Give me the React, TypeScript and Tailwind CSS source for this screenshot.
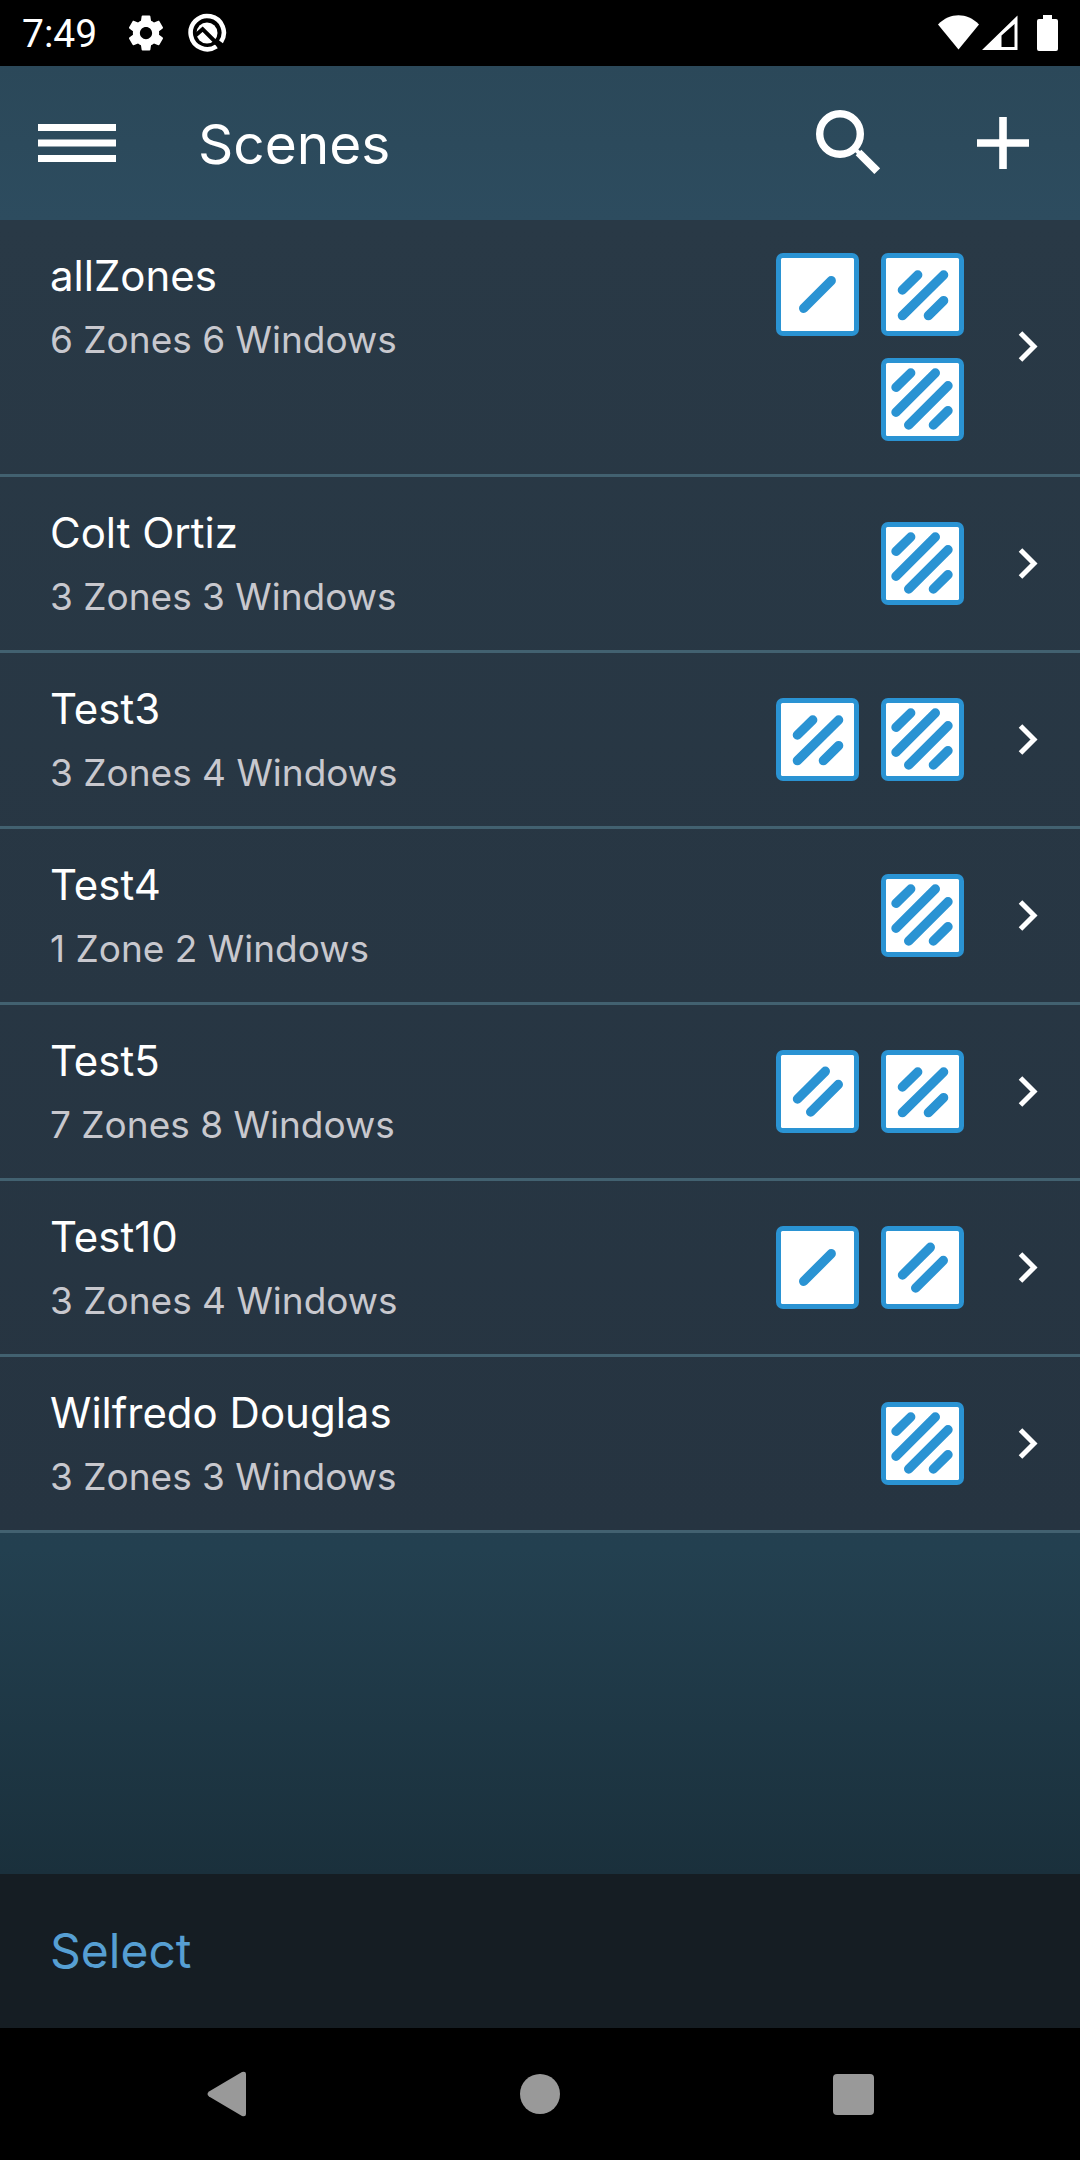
import React from "react";

type Level = 1 | 2 | 3 | 4;

const STRIPES: Record<Level, string> = {
  1: "M27.7 55.3 55.2 27.7",
  2: "M21.5 49 49.3 21.3M34.7 62 62.3 34.5",
  3: "M21.4 37 36.7 22M21.4 62.6 62.6 22M47.4 62.6 62.6 47.6",
  4: "M15 29.3 29.7 15M15 54.3 54.3 15M27.7 67 67 27.7M52.4 67 67 52.7",
};

const SCENES: { name: string; detail: string; tiles: Level[] }[] = [
  { name: "allZones", detail: "6 Zones 6 Windows", tiles: [1, 3, 4] },
  { name: "Colt Ortiz", detail: "3 Zones 3 Windows", tiles: [4] },
  { name: "Test3", detail: "3 Zones 4 Windows", tiles: [3, 4] },
  { name: "Test4", detail: "1 Zone 2 Windows", tiles: [4] },
  { name: "Test5", detail: "7 Zones 8 Windows", tiles: [2, 3] },
  { name: "Test10", detail: "3 Zones 4 Windows", tiles: [1, 2] },
  { name: "Wilfredo Douglas", detail: "3 Zones 3 Windows", tiles: [4] },
];

function StatusBar() {
  return (
    <div className="flex h-[66px] shrink-0 items-center justify-between bg-black pr-[22px] pl-[22px] text-white">
      <div className="flex items-center">
        <span className="pt-[2px] font-['Roboto',sans-serif] text-[39px] leading-[48px]">7:49</span>
        <svg className="ml-7 h-[42px] w-[42px]" viewBox="0 0 24 24" fill="currentColor" aria-hidden="true">
          <path d="M19.43 12.98c.04-.32.07-.64.07-.98s-.03-.66-.07-.98l2.11-1.65c.19-.15.24-.42.12-.64l-2-3.46c-.12-.22-.39-.3-.61-.22l-2.49 1c-.52-.4-1.08-.73-1.69-.98l-.38-2.65C14.46 2.18 14.25 2 14 2h-4c-.25 0-.46.18-.49.42l-.38 2.65c-.61.25-1.17.59-1.69.98l-2.49-1c-.23-.09-.49 0-.61.22l-2 3.46c-.13.22-.07.49.12.64l2.11 1.65c-.04.32-.07.65-.07.98s.03.66.07.98l-2.11 1.65c-.19.15-.24.42-.12.64l2 3.46c.12.22.39.3.61.22l2.49-1c.52.4 1.08.73 1.69.98l.38 2.65c.03.24.24.42.49.42h4c.25 0 .46-.18.49-.42l.38-2.65c.61-.25 1.17-.59 1.69-.98l2.49 1c.23.09.49 0 .61-.22l2-3.46c.12-.22.07-.49-.12-.64l-2.11-1.65zM12 15.5c-1.93 0-3.5-1.57-3.5-3.5s1.57-3.5 3.5-3.5 3.5 1.57 3.5 3.5-1.57 3.5-3.5 3.5z" />
        </svg>
        <svg className="ml-5 h-10 w-10" viewBox="0 0 40 40" aria-hidden="true">
          <path d="M29.5 33.4A16.6 16.6 0 1 1 34 28.9" fill="none" stroke="currentColor" strokeWidth="4.6" />
          <circle cx="20" cy="20" r="10.5" fill="currentColor" />
          <path d="M9 22 15.6 16.2 31 31.5" fill="none" stroke="#000" strokeWidth="4" />
        </svg>
      </div>
      <svg className="h-9 w-[120px]" viewBox="1 0 120 36" fill="currentColor" aria-hidden="true">
        <path d="M1 9.5C13-2.8 30-2.8 42 9.5L21.500 34.500Z" />
        <path fillRule="evenodd" d="M80.500 0.500V35H45ZM64.500 20.500V32H77.500V9Z" />
        <path d="M106 0h9v4h4q2 0 2 2v28q0 2-2 2h-17q-2 0-2-2V6q0-2 2-2h4Z" />
      </svg>
    </div>
  );
}

function Header() {
  return (
    <header className="flex h-[154px] shrink-0 items-center bg-linear-to-b from-[#2b4859] to-[#2d4c5f] pr-[29px] pl-[29px] text-white">
      <button type="button" aria-label="Menu" className="flex h-24 w-24 items-center justify-center">
        <svg className="h-[38px] w-[78px]" viewBox="0 0 78 38" fill="currentColor" aria-hidden="true">
          <path d="M0 0h78v7H0zM0 15.500h78v7H0zM0 31h78v7H0z" />
        </svg>
      </button>
      <h1 className="ml-[73px] flex-1 pt-[2px] text-[55px] leading-[64px]">Scenes</h1>
      <button type="button" aria-label="Search" className="mr-[59px] flex h-24 w-24 items-center justify-center pb-[2px]">
        <svg className="h-16 w-16" viewBox="0 0 64 64" fill="none" stroke="currentColor" aria-hidden="true">
          <circle cx="24" cy="24" r="20.300" strokeWidth="7.400" />
          <path d="M37 37 43 43" strokeWidth="4" />
          <path d="M42.500 42.500 61.200 61.200" strokeWidth="8" />
        </svg>
      </button>
      <button type="button" aria-label="Add scene" className="flex h-24 w-24 items-center justify-center">
        <svg className="h-[52px] w-[52px]" viewBox="0 0 52 52" fill="none" stroke="currentColor" strokeWidth="7.600" aria-hidden="true">
          <path d="M26 0V52M0 26H52" />
        </svg>
      </button>
    </header>
  );
}

function Tile({ level }: { level: Level }) {
  return (
    <svg className="h-[83px] w-[83px]" viewBox="0 0 83 83" aria-hidden="true">
      <rect width="83" height="83" rx="7" fill="#2a93d3" />
      <rect x="5" y="5" width="73" height="73" rx="1.500" fill="#fff" />
      <path d={STRIPES[level]} fill="none" stroke="#2a93d3" strokeWidth="9.400" strokeLinecap="round" />
    </svg>
  );
}

export default function App() {
  return (
    <div className="flex min-h-screen flex-col bg-black font-['Inter',sans-serif]">
      <StatusBar />
      <div className="flex flex-1 flex-col bg-linear-to-b from-[#2c495a] from-0% via-[#234050] via-82% to-[#1a303c] to-100%">
        <Header />
        <ul className="bg-linear-to-b from-[#293946] to-[#263441]">
          {SCENES.map((scene) => (
            <li key={scene.name} className="border-b-[3px] border-[#426170]">
              <button type="button" className="flex w-full items-center pr-[42px] pl-[50px] text-left">
                <span className="flex flex-1 flex-col gap-2 self-start pt-7 pb-[25px]">
                  <span className="text-[42px] leading-[56px] text-white">{scene.name}</span>
                  <span className="text-[37px] leading-[56px] text-[#c8c8ce]">{scene.detail}</span>
                </span>
                <span className="flex w-[188px] flex-wrap justify-end gap-[22px] py-[33px]">
                  {scene.tiles.map((level) => (
                    <Tile key={level} level={level} />
                  ))}
                </span>
                <svg className="ml-[54px] h-8 w-5" viewBox="0 0 20 32" fill="none" stroke="#fff" strokeWidth="5" aria-hidden="true">
                  <path d="M2.500 2 16 15.500 2.500 29" />
                </svg>
              </button>
            </li>
          ))}
        </ul>
      </div>
      <footer className="flex h-[154px] shrink-0 items-center bg-[#151d23] px-[50px]">
        <button type="button" className="text-[48px] leading-[56px] text-[#569fd3]">
          Select
        </button>
      </footer>
      <nav className="flex h-[132px] shrink-0 items-center justify-between bg-black px-[195px] text-[#999]">
        <button type="button" aria-label="Back" className="flex h-24 w-16 items-center justify-center">
          <svg className="h-[46px] w-10" viewBox="0 0 40 46" fill="currentColor" aria-hidden="true">
            <path d="M35 1 2 20.500q-3 2.500 0 5L35 45q4 1 4-2V3q0-3-4-2Z" />
          </svg>
        </button>
        <button type="button" aria-label="Home" className="flex h-24 w-16 items-center justify-center">
          <span className="h-10 w-10 rounded-full bg-current" />
        </button>
        <button type="button" aria-label="Recent apps" className="flex h-24 w-16 items-center justify-center">
          <span className="h-[41px] w-[41px] rounded-[4px] bg-current" />
        </button>
      </nav>
    </div>
  );
}
